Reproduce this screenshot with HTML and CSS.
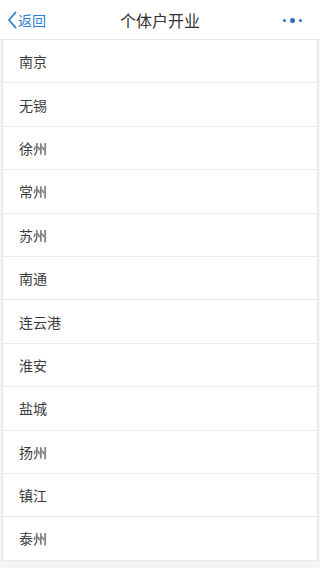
FILE: index.html
```html
<!DOCTYPE html>
<html lang="zh">
<head>
<meta charset="utf-8">
<title>个体户开业</title>
<link rel="stylesheet" href="styles.css">
</head>
<body>
<header class="nav">
  <div class="back">
    <svg class="chev" width="10" height="18" viewBox="0 0 10 18"><path d="M8.5 1.5 L2 9 L8.5 16.5" fill="none" stroke="#2f7fd1" stroke-width="1.8" stroke-linecap="round" stroke-linejoin="round"/></svg>
    <span>返回</span>
  </div>
  <div class="title">个体户开业</div>
  <div class="more"><i class="dot"></i><i class="dot big"></i><i class="dot"></i></div>
</header>
<ul class="list">
  <li>南京</li>
  <li>无锡</li>
  <li>徐州</li>
  <li>常州</li>
  <li>苏州</li>
  <li>南通</li>
  <li>连云港</li>
  <li>淮安</li>
  <li>盐城</li>
  <li>扬州</li>
  <li>镇江</li>
  <li>泰州</li>
</ul>
</body>
</html>
```
FILE: styles.css
```css
* { box-sizing: border-box; }
html, body { margin: 0; padding: 0; }
body {
  width: 320px;
  height: 568px;
  overflow: hidden;
  background: #f4f4f4;
  font-family: "Noto Sans CJK SC", "Noto Sans", sans-serif;
  color: #333;
}
.nav {
  height: 40px;
  background: #fff;
  border-bottom: 1px solid #e6e6e6;
  display: flex;
  align-items: center;
  justify-content: space-between;
  padding: 0 18px 0 7px;
  position: relative;
}
.back {
  display: flex;
  align-items: center;
  gap: 1px;
  color: #2f7fd1;
  font-size: 14px;
}
.title {
  position: absolute;
  left: 0;
  right: 0;
  text-align: center;
  font-size: 16px;
  color: #333;
  pointer-events: none;
}
.more {
  display: flex;
  align-items: center;
  gap: 4px;
  padding-top: 1px;
}
.dot {
  width: 3px;
  height: 3px;
  border-radius: 50%;
  background: #2f6fc0;
  display: block;
}
.dot.big { width: 5px; height: 5px; }
.list {
  list-style: none;
  margin: 0 2px;
  padding: 0;
  background: #fff;
  border-left: 1px solid #e4e4e4;
  border-right: 1px solid #e4e4e4;
}
.list li {
  height: 43.4px;
  border-bottom: 1px solid #ececec;
  display: flex;
  align-items: center;
  padding-left: 16px;
  font-size: 14px;
  color: #3c3c3c;
}
```
